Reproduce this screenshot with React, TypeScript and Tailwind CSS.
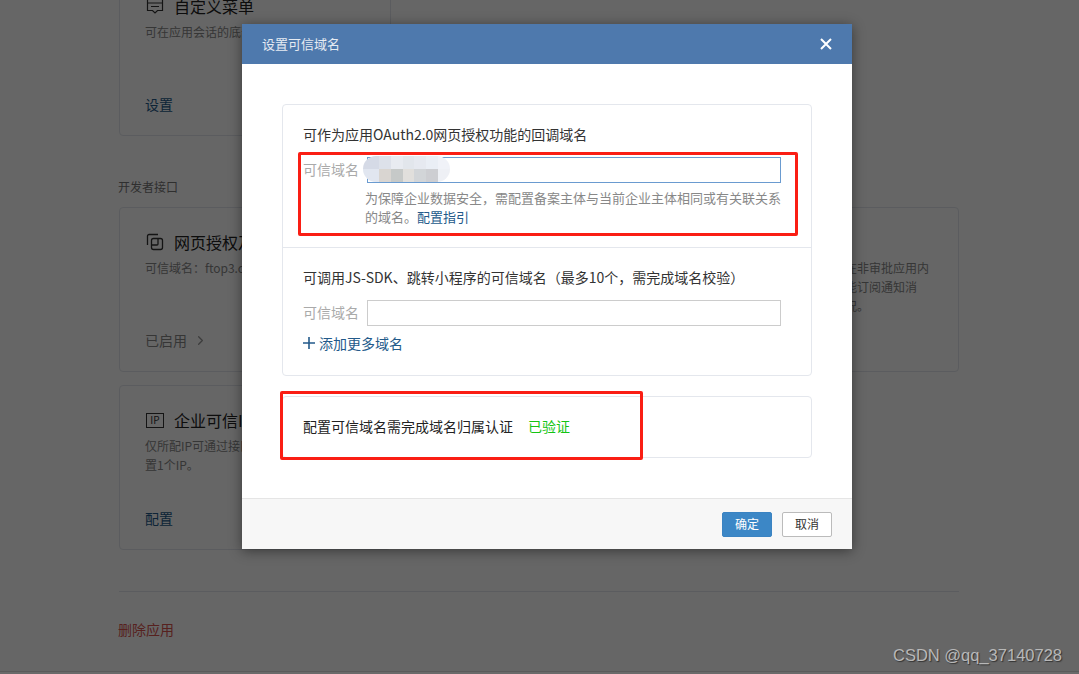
import React from "react";
import { ChevronRight } from "lucide-react";

function MenuIcon() {
  return (
    <svg width="18" height="18" viewBox="0 0 18 18" fill="none" stroke="#333" strokeWidth="1.2">
      <path d="M1.5 1.5h15v12h-5l-2.5 2.5-2.5-2.5h-5z" />
      <path d="M1.5 6h15M5 9.5h8" />
    </svg>
  );
}

function CopyIcon() {
  return (
    <svg width="18" height="18" viewBox="0 0 18 18" fill="none" stroke="#333" strokeWidth="1.3">
      <path d="M12 1.5H3a1.5 1.5 0 0 0-1.500 1.500V12" />
      <rect x="5.500" y="5.500" width="11" height="11" rx="2" />
      <path d="M5.500 12H11a1 1 0 0 0 1-1V5.500" />
    </svg>
  );
}

function IpIcon() {
  return (
    <span className="flex h-[15px] w-[18px] items-center justify-center border border-[#333] text-[10px] leading-none text-[#333]">
      IP
    </span>
  );
}

function Card({
  icon,
  title,
  lines,
  action,
  chevron,
}: {
  icon: React.ReactNode;
  title: string;
  lines: string[];
  action: string;
  chevron?: boolean;
}) {
  return (
    <div className="flex h-[165px] flex-col rounded-[4px] border border-[#e4e7ed] bg-white pl-[25px] pr-[26px] pt-[22px]">
      <div className="flex h-[24px] items-center gap-[10px] whitespace-nowrap text-[16px] text-[#222]">
        <span className="ml-px flex w-[18px] justify-center">{icon}</span>
        {title}
      </div>
      <div className="mt-[4px] whitespace-nowrap text-[12px] leading-[19px] text-[#888]">
        {lines.map((l) => (
          <div key={l}>{l}</div>
        ))}
      </div>
      <div className="mt-auto mb-[21px] flex items-center gap-[6px] text-[14px] leading-[20px] text-[#235a8a]">
        <span className={chevron ? "text-[#888]" : ""}>{action}</span>
        {chevron && <ChevronRight size={15} className="text-[#999]" />}
      </div>
    </div>
  );
}

const mosaic = [
  "#d5dae6", "#dde1ea", "#e8ebf1", "#e2e6ec", "#e6e9f0", "#eaeef5", "#f0f2f8",
  "#e1e6f0", "#d9d5d1", "#c6c9c8", "#e1dfdc", "#d2d5d8", "#cdced2", "#eef0f5",
];

export default function App() {
  return (
    <div className="relative h-[674px] w-[1079px] overflow-hidden bg-white font-['Noto_Sans_CJK_SC','Noto_Sans',sans-serif]">
      <div className="ml-[119px] -mt-[29px] w-[840px]">
        <div className="grid grid-cols-3 gap-x-[12px]">
          <Card icon={<MenuIcon />} title="自定义菜单" lines={["可在应用会话的底部自定义菜单"]} action="设置" />
        </div>
        <div className="-ml-px mt-[41px] text-[12px] leading-[20px] text-[#777]">开发者接口</div>
        <div className="mt-[10px] grid grid-cols-3 gap-x-[12px] gap-y-[13px]">
          <Card icon={<CopyIcon />} title="网页授权及JS-SDK" lines={["可信域名：ftop3.com.cn"]} action="已启用" chevron />
          <Card icon={<CopyIcon />} title="企业微信授权登录" lines={["已启用"]} action="设置" />
          <Card
            icon={<MenuIcon />}
            title="接收消息"
            lines={["可接收成员消息及事件，在非审批应用内", "可管理审批单据状态，还能订阅通知消", "及查询审批单最新处理状况。"]}
            action="设置"
          />
          <Card icon={<IpIcon />} title="企业可信IP" lines={["仅所配IP可通过接口调用企业微信，最多可配", "置1个IP。"]} action="配置" />
        </div>
        <div className="mt-[41px] border-t border-[#e4e7ed]" />
        <div className="-ml-px mt-[27px] text-[14px] leading-[20px] text-[#d9534f]">删除应用</div>
      </div>

      {/* dim layer */}
      <div className="absolute inset-0 bg-black/60" />
      <div className="absolute inset-x-0 bottom-0 h-[3px] border-t border-[#5a5a5a] bg-[#6a6a6a]" />

      {/* dialog */}
      <div className="absolute left-[242px] top-[24px] flex h-[525px] w-[610px] flex-col bg-white shadow-[0_2px_12px_rgba(0,0,0,0.45)]">
        <div className="flex h-[40px] items-center justify-between bg-[#4e79ad] pl-[20px] pr-[20px] text-[13px] text-[#e6ebf2]">
          <span>设置可信域名</span>
          <svg width="12" height="12" viewBox="0 0 12 12" stroke="#fff" strokeWidth="2">
            <path d="M1 1l10 10M11 1L1 11" />
          </svg>
        </div>

        <div className="flex flex-1 flex-col gap-[20px] px-[40px] pt-[40px] text-[14px] text-[#333]">
          <div className="rounded-[4px] border border-[#e4e7ed]">
            <div className="h-[143px] border-b border-[#e4e7ed] px-[20px] pt-[19px]">
              <div className="leading-[20px]">可作为应用OAuth2.0网页授权功能的回调域名</div>
              <div className="mt-[13px] flex h-[26px] items-center">
                <span className="w-[64px] pb-[2px] text-[#aaa]">可信域名</span>
                <div className="relative h-[26px] w-[414px] border border-[#6a9bd0] bg-white">
                  <div className="absolute -left-[5px] -top-[2px] grid h-[26px] w-[87px] grid-cols-[16px_repeat(6,1fr)] overflow-hidden rounded-[13px]">
                    {mosaic.map((c, i) => (
                      <span key={i} style={{ backgroundColor: c }} />
                    ))}
                  </div>
                </div>
              </div>
              <div className="ml-[62px] mt-[5px] w-[420px] text-[13px] leading-[19px] text-[#888]">
                为保障企业数据安全，需配置备案主体与当前企业主体相同或有关联关系的域名。
                <span className="text-[#235a8a]">配置指引</span>
              </div>
            </div>
            <div className="h-[127px] px-[20px] pt-[19px]">
              <div className="leading-[20px]">可调用JS-SDK、跳转小程序的可信域名（最多10个，需完成域名校验）</div>
              <div className="mt-[13px] flex h-[26px] items-center">
                <span className="w-[64px] pb-[2px] text-[#aaa]">可信域名</span>
                <div className="h-[26px] w-[414px] border border-[#ccc] bg-white" />
              </div>
              <div className="mt-[7px] flex h-[20px] items-center gap-[4px] text-[#235a8a]">
                <svg width="12" height="12" viewBox="0 0 12 12" stroke="#235a8a" strokeWidth="1.6">
                  <path d="M6 0v12M0 6h12" />
                </svg>
                添加更多域名
              </div>
            </div>
          </div>

          <div className="flex h-[62px] items-center gap-[15px] rounded-[4px] border border-[#e4e7ed] px-[20px] pb-[2px]">
            <span className="text-[#222]">配置可信域名需完成域名归属认证</span>
            <span className="text-[14px] text-[#14c414]">已验证</span>
          </div>
        </div>

        <div className="flex h-[51px] items-center justify-end gap-[10px] border-t border-[#e5e5e5] bg-[#f7f7f7] pr-[20px] text-[12px]">
          <button className="h-[25px] w-[50px] rounded-[2px] border border-[#3a83c2] bg-[#3c87c6] text-white">确定</button>
          <button className="h-[25px] w-[50px] rounded-[2px] border border-[#bbb] bg-white text-[#333]">取消</button>
        </div>
      </div>

      {/* red annotations */}
      <div className="absolute left-[298px] top-[152px] h-[84px] w-[500px] rounded-[2px] border-[3px] border-[#fa1e14]" />
      <div className="absolute left-[280px] top-[391px] h-[69px] w-[363px] rounded-[2px] border-[3px] border-[#fa1e14]" />

      {/* watermark */}
      <div className="absolute left-[893px] top-[645px] font-['Liberation_Sans',sans-serif] text-[16.500px] leading-[20px] text-[#b8b8b8] [text-shadow:1px_1px_1px_#333]">
        CSDN @qq_37140728
      </div>
    </div>
  );
}
